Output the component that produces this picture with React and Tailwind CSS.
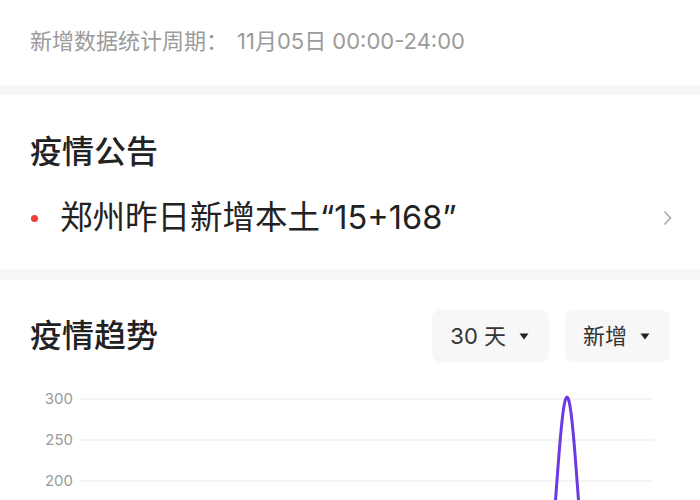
import { useMemo } from 'react';

const FONT = { fontFamily: '"Inter", "Noto Sans CJK SC", sans-serif' };

// small dark caret used by the dropdown pills
function Caret() {
  return (
    <svg width="10" height="7" viewBox="0 0 10 7" className="shrink-0">
      <path d="M0.5 0.5 L9.5 0.5 L5 6.5 Z" fill="#222" />
    </svg>
  );
}

function Pill({ label }) {
  return (
    <button className="h-[52px] flex items-center gap-[13px] pl-[18px] pr-[20px] rounded-[8px] bg-[#f7f7f7] text-[22px] text-[#333]">
      <span>{label}</span>
      <Caret />
    </button>
  );
}

function TrendChart() {
  // only the top of the axis fits in the window
  const ticks = [300, 250, 200];
  const top = 37;
  const step = 41;
  const base = top + step * 6;

  // spike around day 28, flat elsewhere
  const path = useMemo(() => {
    const pts = [];
    for (let x = 80; x <= 653; x += 1) {
      const y = base - 242 * Math.exp(-Math.pow((x - 567) / 15.4, 2)) - 6;
      pts.push(`${x},${y.toFixed(1)}`);
    }
    return 'M' + pts.join(' L');
  }, [base]);

  return (
    <svg width="700" height="138" viewBox="0 0 700 138" className="block">
      {ticks.map((t, i) => (
        <g key={t}>
          <line x1="80" x2="653" y1={top + i * step} y2={top + i * step} stroke="#f0f0f0" strokeWidth="1.5" />
          <text
            x="73"
            y={top + i * step + 5}
            textAnchor="end"
            fontSize="15"
            fill="#9a9a9a"
            style={FONT}
          >
            {t}
          </text>
        </g>
      ))}
      <path d={path} fill="none" stroke="#6a3be0" strokeWidth="3" strokeLinejoin="round" />
    </svg>
  );
}

export default function App() {
  return (
    <div className="w-[700px] h-[500px] overflow-hidden bg-white" style={FONT}>
      {/* period */}
      <div className="pt-[27px] pb-[30px] px-[30px]">
        <p className="text-[22px] leading-[28px] text-[#9b9b9b]">
          新增数据统计周期：<span className="ml-[9px]">11月05日 00:00-24:00</span>
        </p>
      </div>

      <div className="h-[10px] bg-[#f6f6f6]" />

      {/* announcements */}
      <div className="pt-[37px] pb-[31px] px-[30px]">
        <h2 className="text-[32px] leading-[40px] font-medium text-[#222]">疫情公告</h2>
        <div className="mt-[26px] h-[40px] flex items-center">
          <span className="w-[7px] h-[7px] rounded-full bg-[#ef3b3b] ml-[1px] mr-[22px] shrink-0" />
          <span className="flex-1 text-[32.5px] leading-[40px] text-[#222]">郑州昨日新增本土“15+168”</span>
          <svg width="9" height="16" viewBox="0 0 9 16" className="mr-[-2px]">
            <polyline points="1.5,1.5 7.5,8 1.5,14.5" fill="none" stroke="#a8a8a8" strokeWidth="1.6" />
          </svg>
        </div>
      </div>

      <div className="h-[11px] bg-[#f6f6f6]" />

      {/* trend */}
      <div className="pt-[30px]">
        <div className="flex items-center justify-between px-[30px]">
          <h2 className="text-[32px] leading-[40px] font-medium text-[#222]">疫情趋势</h2>
          <div className="flex gap-[16px]">
            <Pill label="30 天" />
            <Pill label="新增" />
          </div>
        </div>
        <TrendChart />
      </div>
    </div>
  );
}
